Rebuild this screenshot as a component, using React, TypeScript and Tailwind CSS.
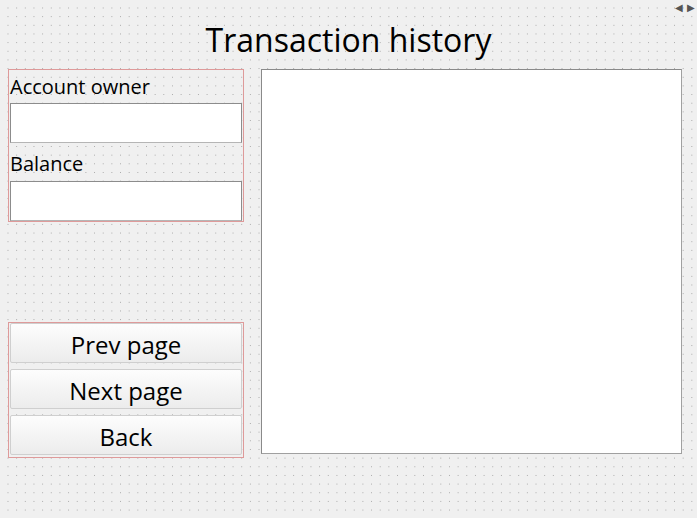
import React from "react";

const font = { fontFamily: '"Open Sans", "Noto Sans", sans-serif' };

function Btn({ label }: { label: string }) {
  return (
    <div className="flex h-[40px] items-center justify-center rounded-[2px] border border-[#cfcfcf] bg-gradient-to-b from-[#fdfdfd] to-[#ececec] pt-[4px] text-[24px] leading-none text-black">
      {label}
    </div>
  );
}

function Field() {
  return <div className="h-[40px] border border-[#8c8c8c] border-b-[#b5b5b5] bg-white" />;
}

export default function App() {
  return (
    <div
      className="relative flex h-[518px] w-[697px] flex-col overflow-hidden bg-[#f0f0f0] [background-image:radial-gradient(circle,#a8a8a8_0.7px,transparent_0.9px)] [background-size:8.67px_8.67px] [background-position:3.67px_3.67px] text-black"
      style={font}
    >
      <div className="absolute right-[2px] top-[2px] flex gap-[4px] text-[10px] leading-none text-[#555]">
        <span>◀</span>
        <span>▶</span>
      </div>
      <div className="flex h-[69px] items-center justify-center pt-[10px] text-[32px] leading-none">
        Transaction history
      </div>
      <div className="flex gap-[17px] pl-[8px]">
        <div className="flex w-[236px] flex-col">
          <div className="flex h-[153px] flex-col border border-[#de9a9a] px-[1px]">
            <div className="flex h-[33px] items-center text-[20px] leading-none">Account owner</div>
            <Field />
            <div className="flex h-[38px] items-center pt-[3px] text-[20px] leading-none">Balance</div>
            <Field />
          </div>
          <div className="mt-[100px] flex h-[136px] flex-col gap-[6px] border border-[#de9a9a] px-[1px] pt-[0px]">
            <Btn label="Prev page" />
            <Btn label="Next page" />
            <Btn label="Back" />
          </div>
        </div>
        <div className="h-[385px] w-[421px] border border-[#8a8a8a] border-r-[#a0a0a0] border-b-[#a0a0a0] bg-white" />
      </div>
    </div>
  );
}
